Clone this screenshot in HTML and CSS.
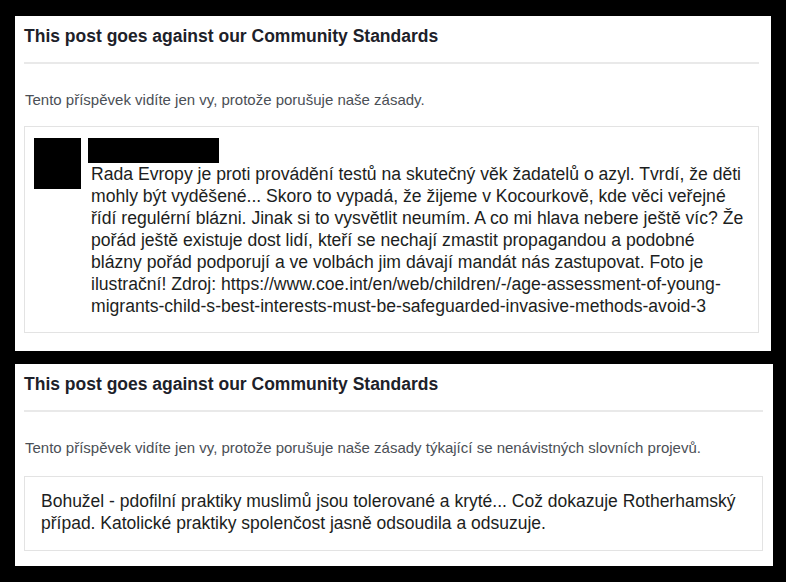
FILE: index.html
```html
<!DOCTYPE html>
<html lang="cs">
<head>
  <meta charset="UTF-8" />
  <meta name="viewport" content="width=device-width, initial-scale=1.0"/>
  <title>Community Standards</title>
  <link rel="stylesheet" href="styles.css">
</head>
<body>

  <div class="notice">
    <h2 class="notice-title">This post goes against our Community Standards</h2>
    <p class="notice-info">Tento příspěvek vidíte jen vy, protože porušuje naše zásady.</p>

    <div class="post">
      <div class="avatar"></div>
      <div class="post-body">
        <div class="author"></div>
        <p class="post-text">Rada Evropy je proti provádění testů na skutečný věk žadatelů o azyl. Tvrdí, že děti<br>
          mohly být vyděšené... Skoro to vypadá, že žijeme v Kocourkově, kde věci veřejné<br>
          řídí regulérní blázni. Jinak si to vysvětlit neumím. A co mi hlava nebere ještě víc? Že<br>
          pořád ještě existuje dost lidí, kteří se nechají zmastit propagandou a podobné<br>
          blázny pořád podporují a ve volbách jim dávají mandát nás zastupovat. Foto je<br>
          ilustrační! Zdroj: https://www.coe.int/en/web/children/-/age-assessment-of-young-<br>
          migrants-child-s-best-interests-must-be-safeguarded-invasive-methods-avoid-3</p>
      </div>
    </div>
  </div>

  <div class="notice notice-wide">
    <h2 class="notice-title">This post goes against our Community Standards</h2>
    <p class="notice-info">Tento příspěvek vidíte jen vy, protože porušuje naše zásady týkající se nenávistných slovních projevů.</p>

    <div class="post post-plain">
      <p class="post-text">Bohužel - pdofilní praktiky muslimů jsou tolerované a kryté... Což dokazuje Rotherhamský případ. Katolické praktiky spolenčost jasně odsoudila a odsuzuje.</p>
    </div>
  </div>

</body>
</html>
```

FILE: styles.css
```css
html {
  background: #000;
}
body {
  margin: 0;
  padding: 16px 0 0 15px;
  background: #000;
  font-family: "Liberation Sans", Arial, sans-serif;
  display: flex;
  flex-direction: column;
  gap: 13px;
}
.notice {
  background: #fff;
  width: 735px;
  padding: 8px 12px 18px 9px;
}
.notice-wide {
  width: 739px;
  padding-right: 10px;
  padding-bottom: 15px;
}
.notice-title {
  margin: 0;
  font-size: 17.5px;
  line-height: 24px;
  font-weight: bold;
  color: #1d2129;
  padding-bottom: 14px;
  border-bottom: 2px solid #e9e9e9;
}
.notice-info {
  margin: 27px 0 0 1px;
  font-size: 15px;
  line-height: 18px;
  color: #4b4f56;
}
.post {
  margin-top: 17px;
  border: 1px solid #e3e3e3;
  display: flex;
  gap: 7px;
  padding: 11px 4px 15px 9px;
}
.post-plain {
  margin-top: 19px;
  padding: 13px 10px 16px 14px;
}
.avatar {
  flex: none;
  width: 47px;
  height: 51px;
  background: #000;
}
.post-body {
  flex: 1;
}
.author {
  width: 131px;
  height: 25px;
  background: #000;
}
.post-text {
  margin: 0 0 0 3px;
  font-size: 17.6px;
  line-height: 22px;
  color: #1c1e21;
}
.post-plain .post-text {
  margin-left: 2px;
  font-size: 17.5px;
}
```
